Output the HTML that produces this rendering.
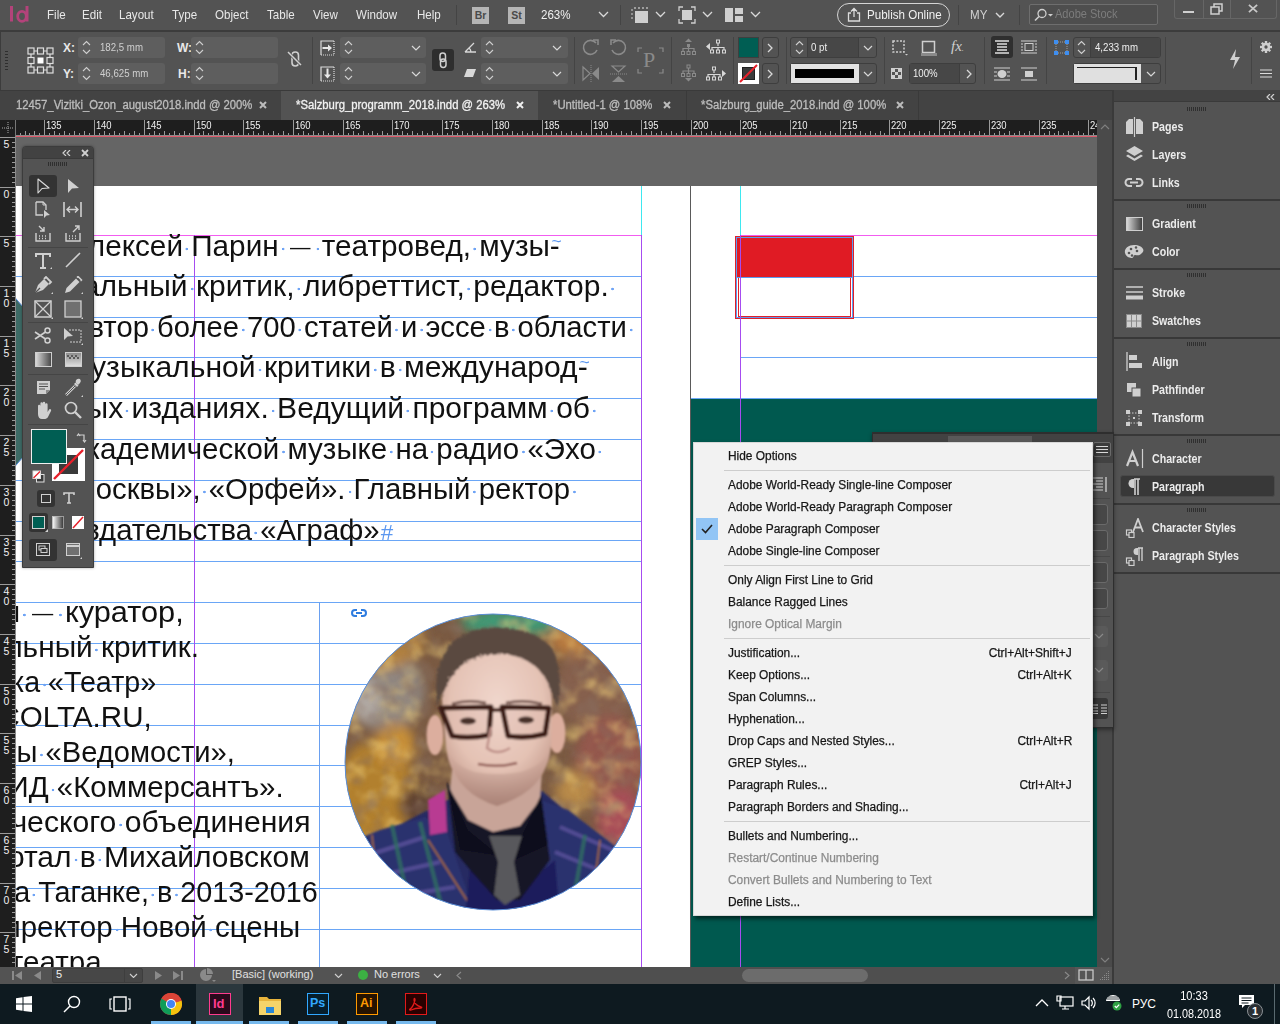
<!DOCTYPE html>
<html><head><meta charset="utf-8">
<style>
*{box-sizing:border-box;margin:0;padding:0}
html,body{width:1280px;height:1024px;overflow:hidden;background:#535353;font-family:"Liberation Sans",sans-serif;color:#e6e6e6;font-size:12px}
.a{position:absolute}
#doc{left:0;top:0;width:1097px;height:967px;clip-path:inset(136px 0 0 16px);overflow:hidden}
.gl{height:1px;background:#6aa6f6}
.tx{font-size:29px;line-height:0;height:0;white-space:pre;color:#111;transform-origin:0 0}
.tx b{font-weight:normal;background:radial-gradient(circle,#6ea3f5 0,#6ea3f5 1px,transparent 1.6px) no-repeat;background-size:4px 4px;background-position:center 17px}
.tx .em{font-style:normal;font-size:20px;position:relative;top:-2px;margin:0 3px}
.tx u{text-decoration:none;color:#5b97f0;font-size:17px;position:relative;top:-9px;margin-left:-8px}
.tx s{text-decoration:none;color:#5b97f0;font-size:22px;font-style:italic;margin-left:1px}
.mb{top:7px;font-size:13px;color:#e8e8e8;transform:scaleX(.89);transform-origin:0 0;white-space:pre}
.vs{width:1px;background:#444}
.lb{font-weight:bold;font-size:12px;color:#e8e8e8}
.fld{height:21px;background:#5e5e5e;border-radius:3px}
.btn{width:17px;height:21px;border:1px solid #3e3e3e;border-radius:3px}
.tb{top:98px;font-size:12px;color:#bdbdbd;-webkit-text-stroke:0.3px currentColor;transform:scaleX(.94);transform-origin:0 0;white-space:pre}
.tx2{top:96px;font-size:14px;font-weight:bold;color:#c8c8c8}
.mi{font-size:12px;line-height:15px;white-space:pre;-webkit-text-stroke:0.25px currentColor}
.rl{font-size:10.5px;line-height:14px;color:#f0f0f0;letter-spacing:-0.2px;transform:scaleX(.9);transform-origin:0 0}
.rlv{font-size:10.5px;line-height:10px;color:#f0f0f0;width:9px;text-align:center}
.dsep{left:1114px;width:166px;height:1.5px;background:#383838}
.grip{left:1187px;width:19px;height:4px;background:repeating-linear-gradient(90deg,#2f2f2f 0 1px,transparent 1px 2px)}
.di{left:1152px;font-size:12.5px;font-weight:bold;color:#ececec;line-height:15px;transform:scaleX(.85);transform-origin:0 0;white-space:pre}
.tsep{left:28px;width:60px;height:1px;background:#454545}
.pbox{left:1040px;width:68px;height:21px;border:1px solid #6a6a6a;border-radius:3px;background:#474747}
.val{font-size:11.5px;color:#d0d0d0;transform:scaleX(.84);transform-origin:0 0;white-space:pre}
.spn{width:9px;height:15px}
</style></head><body>
<div id="doc" class="a">
<div class="a" style="left:0;top:0;width:1097px;height:967px;background:#656565"></div>
<div class="a" style="left:-100px;top:186px;width:790px;height:900px;background:#fff"></div>
<div class="a" style="left:691px;top:186px;width:500px;height:900px;background:#fff"></div>
<div class="a" style="left:690px;top:186px;width:1px;height:900px;background:#5a5a5a"></div>
<div class="a" style="left:691px;top:398px;width:420px;height:600px;background:#00594f"></div>
<div class="a gl" style="left:0;top:276px;width:641px"></div>
<div class="a gl" style="left:854px;top:276px;width:243px"></div>
<div class="a gl" style="left:0;top:317px;width:641px"></div>
<div class="a gl" style="left:854px;top:317px;width:243px"></div>
<div class="a gl" style="left:0;top:357px;width:641px"></div>
<div class="a gl" style="left:740px;top:357px;width:357px"></div>
<div class="a gl" style="left:0;top:398px;width:641px"></div>
<div class="a gl" style="left:0;top:439px;width:641px"></div>
<div class="a gl" style="left:0;top:480px;width:641px"></div>
<div class="a gl" style="left:0;top:521px;width:641px"></div>
<div class="a gl" style="left:0;top:561px;width:641px"></div>
<div class="a gl" style="left:0;top:602px;width:641px"></div>
<div class="a gl" style="left:0;top:643px;width:641px"></div>
<div class="a gl" style="left:0;top:684px;width:641px"></div>
<div class="a gl" style="left:0;top:725px;width:641px"></div>
<div class="a gl" style="left:0;top:765px;width:641px"></div>
<div class="a gl" style="left:0;top:806px;width:641px"></div>
<div class="a gl" style="left:0;top:847px;width:641px"></div>
<div class="a gl" style="left:0;top:888px;width:641px"></div>
<div class="a gl" style="left:0;top:929px;width:641px"></div>
<div class="a gl" style="left:0;top:969px;width:641px"></div>
<div class="a gl" style="left:0;top:540px;width:641px"></div>
<div class="a gl" style="left:691px;top:398px;width:410px"></div>
<svg class="a" style="left:0;top:290px" width="24" height="190" viewBox="0 290 24 190"><path d="M0 280 L23 307 L23 457 L0 484 Z" fill="#3d6b66" stroke="#5a8fe0" stroke-width="1"/></svg>
<div class="a" style="left:735px;top:236px;width:119px;height:83px;border:1px solid #e0202a;background:#fff"></div>
<div class="a" style="left:736px;top:237px;width:117px;height:81px;border:1px solid #5b9bf0"></div>
<div class="a" style="left:737px;top:238px;width:115px;height:39px;background:#e01b24"></div>
<div class="a" style="left:737px;top:277px;width:115px;height:1px;background:#5b9bf0"></div>
<div class="a" style="left:738px;top:278px;width:113px;height:39px;border:1px solid #e0202a;border-top:none"></div>
<div class="a" style="left:0;top:235px;width:642px;height:1px;background:#f25cf0"></div>
<div class="a" style="left:740px;top:235px;width:360px;height:1px;background:#f25cf0"></div>
<div class="a" style="left:641px;top:186px;width:1px;height:49px;background:#3ee8f0"></div>
<div class="a" style="left:641px;top:235px;width:1px;height:740px;background:#a64cf0"></div>
<div class="a" style="left:740px;top:186px;width:1px;height:49px;background:#3ee8f0"></div>
<div class="a" style="left:740px;top:235px;width:1px;height:740px;background:#a64cf0"></div>
<div class="a" style="left:194px;top:235px;width:1px;height:740px;background:#a64cf0"></div>
<div class="a" style="left:319px;top:602px;width:1px;height:370px;background:#6aa0f0"></div>
<div class="a tx" style="left:67.79px;top:246px;transform:scaleX(1.0244)">Алексей<b> </b>Парин<b> </b><i class="em">—</i><b> </b>театровед,<b> </b>музы-<u>~</u></div>
<div class="a tx" style="left:68.58px;top:286px;transform:scaleX(1.0353)">кальный<b> </b>критик,<b> </b>либреттист,<b> </b>редактор.<b> </b></div>
<div class="a tx" style="left:69.46px;top:326.5px;transform:scaleX(1.0076)">Автор<b> </b>более<b> </b>700<b> </b>статей<b> </b>и<b> </b>эссе<b> </b>в<b> </b>области<b> </b></div>
<div class="a tx" style="left:69.5px;top:367px;transform:scaleX(1.0383)">музыкальной<b> </b>критики<b> </b>в<b> </b>международ-<u>~</u></div>
<div class="a tx" style="left:69.5px;top:408px;transform:scaleX(1.0361)">ных<b> </b>изданиях.<b> </b>Ведущий<b> </b>программ<b> </b>об<b> </b></div>
<div class="a tx" style="left:69.5px;top:449px;transform:scaleX(1.0168)">академической<b> </b>музыке<b> </b>на<b> </b>радио<b> </b>«Эхо<b> </b></div>
<div class="a tx" style="left:71.16px;top:489px;transform:scaleX(1.011)">Москвы»,<b> </b>«Орфей».<b> </b>Главный<b> </b>ректор<b> </b></div>
<div class="a tx" style="left:69.5px;top:530px;transform:scaleX(1.0089)">издательства<b> </b>«Аграф»<s>#</s></div>
<div class="a tx" style="left:-229.74px;top:612px;transform:scaleX(1.0601)">Александр<b> </b>Рябин<b> </b><i class="em">—</i><b> </b>куратор,</div>
<div class="a tx" style="left:-96.03px;top:647px;transform:scaleX(1.0289)">музыкальный<b> </b>критик.</div>
<div class="a tx" style="left:-377.58px;top:682px;transform:scaleX(0.9873)">обозреватель<b> </b>журнала-сайтика<b> </b>«Театр»</div>
<div class="a tx" style="left:-112.2px;top:717px;transform:scaleX(1.0197)">и<b> </b>сайта<b> </b>COLTA.RU,</div>
<div class="a tx" style="left:-50.57px;top:752px;transform:scaleX(1.0053)">газеты<b> </b>«Ведомости»,</div>
<div class="a tx" style="left:-16.6px;top:787px;transform:scaleX(1.0144)">и<b> </b>ИД<b> </b>«Коммерсантъ».</div>
<div class="a tx" style="left:-51.27px;top:822px;transform:scaleX(1.0402)">творческого<b> </b>объединения</div>
<div class="a tx" style="left:-44.58px;top:857px;transform:scaleX(1.0344)">Работал<b> </b>в<b> </b>Михайловском</div>
<div class="a tx" style="left:-99.11px;top:892px;transform:scaleX(0.991)">театре<b> </b>на<b> </b>Таганке,<b> </b>в<b> </b>2013-2016</div>
<div class="a tx" style="left:-12.84px;top:927px;transform:scaleX(1.0166)">директор<b> </b>Новой<b> </b>сцены</div>
<div class="a tx" style="left:-133.23px;top:962px;transform:scaleX(1.0197)">Большого<b> </b>театра</div>
<svg class="a" style="left:351px;top:608px" width="16" height="10" viewBox="0 0 16 10"><path d="M6 2H4a3 3 0 0 0 0 6h2M10 2h2a3 3 0 0 1 0 6h-2M5 5h6" stroke="#2f7de0" stroke-width="2" fill="none"/></svg>
</div>
<svg class="a" style="left:343px;top:612px" width="300" height="300" viewBox="343 612 300 300">
<defs>
<clipPath id="pc"><circle cx="493" cy="762" r="148"/></clipPath>
<filter id="bl" x="-30%" y="-30%" width="160%" height="160%"><feGaussianBlur stdDeviation="6"/></filter>
<filter id="bl2" x="-10%" y="-10%" width="120%" height="120%"><feGaussianBlur stdDeviation="0.8"/></filter>
<filter id="leaf" x="0" y="0" width="100%" height="100%"><feTurbulence type="fractalNoise" baseFrequency="0.05" numOctaves="3" seed="11"/><feColorMatrix values="0 0 0 0 0.86  0 0 0 0 0.62  0 0 0 0 0.20  2.2 0 0 0 -1.0"/><feGaussianBlur stdDeviation="1.4"/></filter>
<filter id="dark" x="0" y="0" width="100%" height="100%"><feTurbulence type="fractalNoise" baseFrequency="0.06" numOctaves="3" seed="4"/><feColorMatrix values="0 0 0 0 0.25  0 0 0 0 0.16  0 0 0 0 0.12  0 2.4 0 0 -1.1"/><feGaussianBlur stdDeviation="1.4"/></filter>
<filter id="curl" x="-10%" y="-10%" width="120%" height="120%"><feTurbulence type="turbulence" baseFrequency="0.3" numOctaves="2" seed="3" result="t"/><feDisplacementMap in="SourceGraphic" in2="t" scale="4"/></filter>
<filter id="plaid" x="0" y="0" width="100%" height="100%"><feTurbulence type="fractalNoise" baseFrequency="0.2" numOctaves="1" seed="9"/><feColorMatrix values="0 0 0 0 0.35  0 0 0 0 0.3  0 0 0 0 0.65  0 0 2.5 0 -1.3"/></filter>
<radialGradient id="skin" cx="0.5" cy="0.35" r="0.65"><stop offset="0" stop-color="#f0d6cc"/><stop offset="0.65" stop-color="#e4c2b4"/><stop offset="1" stop-color="#c49a8c"/></radialGradient>
<linearGradient id="stub" x1="0" y1="0" x2="0" y2="1"><stop offset="0" stop-color="#b89488" stop-opacity="0"/><stop offset="1" stop-color="#a07a70" stop-opacity=".75"/></linearGradient>
</defs>
<g clip-path="url(#pc)">
<rect x="340" y="610" width="310" height="310" fill="#7a5a42"/>
<g filter="url(#bl)">
<ellipse cx="385" cy="690" rx="40" ry="40" fill="#8f8680"/>
<ellipse cx="375" cy="640" rx="50" ry="30" fill="#b08040"/>
<ellipse cx="375" cy="795" rx="40" ry="55" fill="#b2802e"/>
<ellipse cx="395" cy="745" rx="20" ry="22" fill="#c89038"/>
<ellipse cx="365" cy="700" rx="16" ry="22" fill="#b0a8a2"/>
<ellipse cx="420" cy="805" rx="20" ry="20" fill="#5e4230"/>
<ellipse cx="510" cy="622" rx="50" ry="14" fill="#3f9a76"/>
<ellipse cx="585" cy="640" rx="35" ry="20" fill="#b87a40"/>
<ellipse cx="595" cy="690" rx="40" ry="40" fill="#86604e"/>
<ellipse cx="610" cy="760" rx="35" ry="45" fill="#94584e"/>
<ellipse cx="575" cy="790" rx="20" ry="20" fill="#b88a48"/>
<ellipse cx="622" cy="820" rx="25" ry="30" fill="#a84e58"/>
</g>
<rect x="340" y="610" width="310" height="310" filter="url(#leaf)" opacity=".7"/>
<rect x="340" y="610" width="310" height="310" filter="url(#dark)" opacity=".6"/>
<g filter="url(#bl2)">
<path d="M380 835 L447 800 L541 790 L600 840 L650 870 L650 920 L340 920 L340 860 Z" fill="#262a62"/>
<path d="M330 850 L380 830 L425 817 L447 832 L470 900 L475 920 L330 920 Z" fill="#2c336e"/>
<path d="M540 800 L568 810 L620 850 L650 870 L650 920 L530 920 L548 860 Z" fill="#2c336e"/>
<path d="M347 862 L425 837 M352 882 L440 862 M360 902 L455 887 M560 827 L640 862 M555 852 L640 887" stroke="#5e54a0" stroke-width="4" opacity=".75"/>
<path d="M392 825 L412 920 M420 822 L445 920 M585 835 L570 920" stroke="#2f6e62" stroke-width="4" opacity=".8"/>
<path d="M428 840 L470 905 M600 840 L590 920 M372 835 L380 920" stroke="#a0683a" stroke-width="1.6"/>
<path d="M470 865 L510 900 L555 860 L560 920 L465 920 Z" fill="#1c1a5c"/>
<path d="M447 782 L470 815 L493 828 L520 815 L541 795 L550 860 L520 900 L497 900 L470 870 L455 852 Z" fill="#181628"/>
<path d="M428 800 L445 790 L447 832 L430 835 Z" fill="#b83a92"/>
<path d="M452 770 L542 770 L540 800 L520 826 L493 832 L468 820 L450 790 Z" fill="#c8a498"/>
<path d="M447 782 L468 830 L500 856 L460 850 Z" fill="#10101c"/>
<path d="M541 795 L522 835 L515 860 L548 845 Z" fill="#10101c"/>
<path d="M489 836 L522 836 L514 862 L520 895 L505 905 L494 895 L498 862 Z" fill="#58585c"/>
<ellipse cx="435" cy="735" rx="8.5" ry="20" fill="#dcae9e"/>
<ellipse cx="557" cy="733" rx="8.5" ry="20" fill="#dcae9e"/>
<path d="M442 700 Q444 650 497 648 Q550 650 552 700 L551 745 Q548 790 497 806 Q452 792 446 748 Z" fill="url(#skin)"/>
<path d="M448 748 Q452 792 497 806 Q548 790 550 748 Q545 765 520 772 Q497 776 475 772 Q452 765 448 748Z" fill="url(#stub)"/>
<path d="M436 706 Q430 664 452 640 Q475 624 500 627 Q532 628 550 646 Q564 670 556 706 Q552 694 546 680 Q532 654 497 653 Q460 655 448 680 Q442 692 436 706 Z" fill="#5a4840" filter="url(#curl)"/>
<path d="M452 704 Q468 699 486 703 M506 703 Q524 699 542 704" stroke="#6e5048" stroke-width="2.5" fill="none"/>
<path d="M441 708 L491 707 L489 735 Q470 739 452 736 Z" fill="#d8b0a4" fill-opacity=".2" stroke="#3a1a12" stroke-width="5" stroke-linejoin="round"/>
<path d="M502 707 L549 708 L545 734 Q526 739 508 736 Z" fill="#d8b0a4" fill-opacity=".2" stroke="#3a1a12" stroke-width="5" stroke-linejoin="round"/>
<path d="M491 710 L502 710" stroke="#3e1e14" stroke-width="3.5"/>
<ellipse cx="468" cy="721" rx="8" ry="3.5" fill="#4a302a"/>
<ellipse cx="526" cy="720" rx="8" ry="3.5" fill="#4a302a"/>
<path d="M491 727 L487 748 Q497 756 510 748" stroke="#c0928a" stroke-width="2.5" fill="none"/>
<path d="M478 764 Q497 768 517 763" stroke="#94605a" stroke-width="2.5" fill="none"/>
</g>
</g>
<circle cx="493" cy="762" r="148" fill="none" stroke="#5b8fd8" stroke-width="1"/>
</svg>

<div class="a" style="left:22px;top:146px;width:72px;height:422px;background:#535353;border:1px solid #3c3c3c;border-radius:4px 4px 0 0;box-shadow:0 0 3px rgba(0,0,0,.35)"></div>
<div class="a" style="left:23px;top:147px;width:70px;height:12px;background:#424242;border-bottom:1px solid #3a3a3a;border-radius:3px 3px 0 0"></div>
<svg class="a" style="left:62px;top:150px" width="9" height="6"><path d="M4 0L1 3l3 3M8 0L5 3l3 3" stroke="#d0d0d0" stroke-width="1.2" fill="none"/></svg>
<svg class="a" style="left:81px;top:149px" width="8" height="8"><path d="M1 1l6 6M7 1L1 7" stroke="#d0d0d0" stroke-width="1.8"/></svg>
<div class="a" style="left:48px;top:162px;width:19px;height:4px;background:repeating-linear-gradient(90deg,#2f2f2f 0 1px,transparent 1px 2px)"></div>
<div class="a" style="left:29px;top:175px;width:28px;height:22px;background:#333;border-radius:3px"></div>
<svg class="a" style="left:37px;top:178px" width="13" height="16" viewBox="0 0 13 16"><path d="M1 1v14l4-4.5L12 10z" stroke="#dcdcdc" stroke-width="1.1" fill="none" stroke-linejoin="round"/></svg>
<svg class="a" style="left:67px;top:178px" width="13" height="16" viewBox="0 0 13 16"><path d="M1 1v14l4-4.5L12 10z" fill="#d0d0d0"/></svg>
<svg class="a" style="left:35px;top:201px" width="16" height="17" viewBox="0 0 16 17"><path d="M1 1h7l3 3v5M1 1v13h7" stroke="#d0d0d0" stroke-width="1.3" fill="none"/><path d="M8 1v3h3" stroke="#d0d0d0" fill="none"/><path d="M9 9v8l2.5-2.5L15 14z" fill="#d0d0d0"/></svg>
<svg class="a" style="left:63px;top:202px" width="19" height="15" viewBox="0 0 19 15"><path d="M1 0v15M18 0v15" stroke="#d0d0d0" stroke-width="1.6"/><path d="M4 7.5h11M7 4.5L4 7.5l3 3M12 4.5l3 3-3 3" stroke="#d0d0d0" stroke-width="1.4" fill="none"/></svg>
<svg class="a" style="left:35px;top:225px" width="16" height="17" viewBox="0 0 16 17"><path d="M1 8v8h14V8" stroke="#d0d0d0" stroke-width="1.4" fill="none"/><path d="M4 11h1M7 11h1M10 11h1M4 13.5h1M7 13.5h1M10 13.5h1" stroke="#d0d0d0" stroke-width="1.6"/><path d="M4 1l5 5M9 2v4H5" stroke="#d0d0d0" stroke-width="1.4" fill="none"/></svg>
<svg class="a" style="left:65px;top:225px" width="16" height="17" viewBox="0 0 16 17"><path d="M1 8v8h14V8" stroke="#d0d0d0" stroke-width="1.4" fill="none"/><path d="M4 11h1M7 11h1M10 11h1M4 13.5h1M7 13.5h1M10 13.5h1" stroke="#d0d0d0" stroke-width="1.6"/><path d="M8 7l6-6M10 1h4v4" stroke="#d0d0d0" stroke-width="1.4" fill="none"/></svg>
<div class="a tsep" style="top:247px"></div>
<svg class="a" style="left:35px;top:253px" width="18" height="17" viewBox="0 0 18 17"><path d="M1 4V1h14v3M8 1v14M5 15h6" stroke="#d0d0d0" stroke-width="2" fill="none"/><path d="M15 16l2-2v2z" fill="#d0d0d0"/></svg>
<svg class="a" style="left:65px;top:252px" width="16" height="16" viewBox="0 0 16 16"><path d="M1 15L15 1" stroke="#d0d0d0" stroke-width="1.6"/></svg>
<svg class="a" style="left:34px;top:276px" width="19" height="19" viewBox="0 0 19 19"><path d="M1 17l3-8 6-6 5 5-6 6z" fill="#d0d0d0"/><path d="M10 3l2-2 5 5-2 2" stroke="#d0d0d0" stroke-width="1.8" fill="none"/><path d="M1 17l5-5" stroke="#535353" stroke-width="1.2"/><path d="M17 18l2-2v2z" fill="#d0d0d0"/></svg>
<svg class="a" style="left:64px;top:276px" width="19" height="19" viewBox="0 0 19 19"><path d="M1 17l1.5-5L12 2.5l3.5 3.5L6 15.5z" fill="#d0d0d0"/><path d="M13 1.5l1-1 3.5 3.5-1 1" stroke="#d0d0d0" stroke-width="1.5" fill="none"/><path d="M17 18l2-2v2z" fill="#d0d0d0"/></svg>
<svg class="a" style="left:34px;top:300px" width="19" height="19" viewBox="0 0 19 19"><rect x="1" y="1" width="16" height="16" stroke="#d0d0d0" stroke-width="1.5" fill="none"/><path d="M1 1l16 16M17 1L1 17" stroke="#d0d0d0" stroke-width="1.2"/><path d="M17 19l2-2v2z" fill="#d0d0d0"/></svg>
<svg class="a" style="left:64px;top:300px" width="19" height="19" viewBox="0 0 19 19"><rect x="1" y="1" width="16" height="16" stroke="#d0d0d0" stroke-width="1.3" fill="#707070"/><path d="M17 19l2-2v2z" fill="#d0d0d0"/></svg>
<div class="a tsep" style="top:322px"></div>
<svg class="a" style="left:34px;top:327px" width="18" height="17" viewBox="0 0 18 17"><circle cx="13.5" cy="3.5" r="2.5" stroke="#d0d0d0" stroke-width="1.5" fill="none"/><circle cx="13.5" cy="13.5" r="2.5" stroke="#d0d0d0" stroke-width="1.5" fill="none"/><path d="M11.5 5L1 12M11.5 12L1 5" stroke="#d0d0d0" stroke-width="1.6"/></svg>
<svg class="a" style="left:63px;top:327px" width="20" height="18" viewBox="0 0 20 18"><path d="M1 1v12l3.5-3.5L10 9z" fill="#d0d0d0"/><path d="M6 3h12v12H6" stroke="#d0d0d0" stroke-dasharray="2 1" fill="none"/><path d="M18 18l2-2v2z" fill="#d0d0d0"/></svg>
<svg class="a" style="left:35px;top:352px" width="17" height="15" viewBox="0 0 17 15"><defs><linearGradient id="tg1"><stop offset="0" stop-color="#dcdcdc"/><stop offset="1" stop-color="#454545"/></linearGradient></defs><rect x=".5" y=".5" width="16" height="14" fill="url(#tg1)" stroke="#cfcfcf"/></svg>
<svg class="a" style="left:65px;top:352px" width="17" height="15" viewBox="0 0 17 15"><defs><linearGradient id="tg2" x2="0" y2="1"><stop offset="0" stop-color="#8a8a8a"/><stop offset="1" stop-color="#e0e0e0"/></linearGradient></defs><rect x=".5" y=".5" width="16" height="14" fill="url(#tg2)" stroke="#cfcfcf"/><path d="M2 3h2v2H2zM6 3h2v2H6zM10 3h2v2h-2zM4 5h2v2H4zM8 5h2v2H8zM12 5h2v2h-2z" fill="#5a5a5a"/></svg>
<div class="a tsep" style="top:374px"></div>
<svg class="a" style="left:36px;top:380px" width="15" height="15" viewBox="0 0 15 15"><path d="M1 1h13v9l-4 4H1z" fill="#d0d0d0"/><path d="M3 4h9M3 6.5h9M3 9h6" stroke="#535353" stroke-width="1.2"/><path d="M10 14v-4h4z" fill="#8a8a8a"/></svg>
<svg class="a" style="left:64px;top:378px" width="19" height="19" viewBox="0 0 19 19"><path d="M2 17l9-9" stroke="#d0d0d0" stroke-width="2.5"/><path d="M2 17l9-9" stroke="#535353" stroke-width="1"/><path d="M10 6l3 3 1.5-1.5-3-3z" fill="#d0d0d0"/><path d="M12 5a3 3 0 0 1 4-4 3 3 0 0 1 0 4l-2 2" fill="#d0d0d0"/><path d="M17 19l2-2v2z" fill="#d0d0d0"/></svg>
<svg class="a" style="left:35px;top:401px" width="17" height="18" viewBox="0 0 17 18"><path d="M3 10V5a1.2 1.2 0 0 1 2.4 0v4V2.5a1.2 1.2 0 0 1 2.4 0V9V2a1.2 1.2 0 0 1 2.4 0v7V3.5a1.2 1.2 0 0 1 2.4 0V11l1.5-2.5a1.2 1.2 0 0 1 2 1.2L13 16c-1 1.5-2 2-4 2H7c-2.5 0-4-2-4-5z" fill="#d0d0d0"/></svg>
<svg class="a" style="left:64px;top:401px" width="18" height="18" viewBox="0 0 18 18"><circle cx="7" cy="7" r="5.5" stroke="#d0d0d0" stroke-width="1.7" fill="none"/><path d="M11 11l6 6" stroke="#d0d0d0" stroke-width="2.4"/></svg>
<div class="a tsep" style="top:424px"></div>
<div class="a" style="left:52px;top:448px;width:33px;height:33px;background:#fff"></div>
<div class="a" style="left:59px;top:455px;width:19px;height:19px;background:#3a3a3a"></div>
<svg class="a" style="left:52px;top:448px" width="33" height="33"><path d="M2 31L31 2" stroke="#e8202a" stroke-width="2.4"/></svg>
<div class="a" style="left:31px;top:429px;width:36px;height:35px;background:#005e53;border:1.5px solid #f0f0f0"></div>
<svg class="a" style="left:76px;top:431px" width="12" height="12" viewBox="0 0 12 12"><path d="M2 4h6v6M1 5l1.5-2L4 5M7 9l1.5 2L10 9" stroke="#d0d0d0" stroke-width="1.2" fill="none"/></svg>
<svg class="a" style="left:32px;top:470px" width="13" height="13" viewBox="0 0 13 13"><rect x="4.5" y="4.5" width="7.5" height="7.5" fill="#3a3a3a" stroke="#e0e0e0"/><rect x="1" y="1" width="7.5" height="7.5" fill="#fff" stroke="#e0e0e0"/><path d="M1.5 8L8 1.5" stroke="#e8202a" stroke-width="1.2"/></svg>
<div class="a" style="left:37px;top:490px;width:18px;height:17px;background:#333;border-radius:3px"></div>
<div class="a" style="left:41px;top:494px;width:10px;height:9px;border:1.2px solid #d0d0d0"></div>
<svg class="a" style="left:63px;top:492px" width="12" height="12" viewBox="0 0 12 12"><path d="M1 3V1h10v2M6 1v10M4 11h4" stroke="#d0d0d0" stroke-width="1.6" fill="none"/></svg>
<div class="a" style="left:29px;top:513px;width:19px;height:19px;background:#333;border-radius:3px"></div>
<div class="a" style="left:32px;top:516px;width:13px;height:13px;background:#005e53;border:1px solid #d0d0d0"></div>
<svg class="a" style="left:45px;top:529px" width="3" height="3"><path d="M3 0v3H0z" fill="#d0d0d0"/></svg>
<svg class="a" style="left:52px;top:516px" width="12" height="13" viewBox="0 0 12 13"><defs><linearGradient id="tg3"><stop offset="0" stop-color="#fff"/><stop offset="1" stop-color="#333"/></linearGradient></defs><rect x=".5" y=".5" width="11" height="12" fill="url(#tg3)" stroke="#d0d0d0" stroke-width=".6"/></svg>
<svg class="a" style="left:72px;top:516px" width="12" height="13" viewBox="0 0 12 13"><rect x="0" y="0" width="12" height="13" fill="#fff"/><path d="M1 12L11 1" stroke="#e8202a" stroke-width="1.5"/></svg>
<div class="a" style="left:29px;top:539px;width:28px;height:22px;background:#333;border-radius:3px"></div>
<svg class="a" style="left:36px;top:543px" width="14" height="13" viewBox="0 0 14 13"><rect x=".5" y=".5" width="13" height="12" stroke="#d0d0d0" fill="none"/><rect x="3" y="3" width="6" height="4" stroke="#d0d0d0" fill="none"/><rect x="5" y="5.5" width="6" height="4" stroke="#d0d0d0" fill="#333"/></svg>
<svg class="a" style="left:66px;top:543px" width="16" height="16" viewBox="0 0 16 16"><rect x=".5" y=".5" width="13" height="12" stroke="#d0d0d0" fill="#707070"/><path d="M1 3h12" stroke="#d0d0d0" stroke-width="2"/><path d="M14 16l2-2v2z" fill="#d0d0d0"/></svg>

<!-- MENU BAR -->
<div class="a" style="left:0;top:0;width:1280px;height:30px;background:#535353"></div>
<svg class="a" style="left:8px;top:5px" width="22" height="18" viewBox="0 0 22 18"><rect x="2" y="1" width="3" height="15.5" fill="#b3437a"/><path d="M17.5 1h3v15.5h-3z" fill="#b3437a"/><ellipse cx="14" cy="11.3" rx="4.3" ry="5" stroke="#b3437a" stroke-width="2.8" fill="none"/></svg>
<div class="a mb" style="left:47px">File</div>
<div class="a mb" style="left:82px">Edit</div>
<div class="a mb" style="left:119px">Layout</div>
<div class="a mb" style="left:172px">Type</div>
<div class="a mb" style="left:215px">Object</div>
<div class="a mb" style="left:267px">Table</div>
<div class="a mb" style="left:313px">View</div>
<div class="a mb" style="left:356px">Window</div>
<div class="a mb" style="left:417px">Help</div>
<div class="a vs" style="left:456px;top:5px;height:20px"></div>
<div class="a" style="left:472px;top:7px;width:17px;height:17px;background:#b5b5b5;color:#4a4a4a;font-weight:bold;font-size:10.5px;line-height:17px;text-align:center">Br</div>
<div class="a" style="left:508px;top:7px;width:17px;height:17px;background:#b5b5b5;color:#4a4a4a;font-weight:bold;font-size:10.5px;line-height:17px;text-align:center">St</div>
<div class="a mb" style="left:541px;color:#f0f0f0">263%</div>
<svg class="a" style="left:598px;top:11px" width="11" height="7"><path d="M1 1l4.5 4.5L10 1" stroke="#d8d8d8" stroke-width="1.3" fill="none"/></svg>
<div class="a vs" style="left:620px;top:5px;height:20px"></div>
<svg class="a" style="left:630px;top:6px" width="20" height="18" viewBox="0 0 20 18"><path d="M1 4h2M1 8h2M1 12h2M5 1v2M9 1v2M13 1v2M17 1v2" stroke="#cfcfcf" stroke-width="1.2"/><rect x="5" y="5" width="13" height="12" fill="#cfcfcf"/></svg>
<svg class="a" style="left:655px;top:11px" width="11" height="7"><path d="M1 1l4.5 4.5L10 1" stroke="#d8d8d8" stroke-width="1.3" fill="none"/></svg>
<svg class="a" style="left:678px;top:6px" width="18" height="18" viewBox="0 0 18 18"><path d="M1 5V1h4M13 1h4v4M17 13v4h-4M5 17H1v-4" stroke="#cfcfcf" stroke-width="1.3" fill="none"/><rect x="4" y="4" width="10" height="10" fill="#cfcfcf"/></svg>
<svg class="a" style="left:702px;top:11px" width="11" height="7"><path d="M1 1l4.5 4.5L10 1" stroke="#d8d8d8" stroke-width="1.3" fill="none"/></svg>
<svg class="a" style="left:725px;top:8px" width="18" height="14" viewBox="0 0 18 14"><rect x="0" y="0" width="8" height="14" fill="#cfcfcf"/><rect x="10" y="0" width="8" height="6" fill="#cfcfcf"/><rect x="10" y="8" width="8" height="6" fill="#cfcfcf"/></svg>
<svg class="a" style="left:750px;top:11px" width="11" height="7"><path d="M1 1l4.5 4.5L10 1" stroke="#d8d8d8" stroke-width="1.3" fill="none"/></svg>
<div class="a" style="left:837px;top:3px;width:113px;height:24px;border:1.3px solid #d5d5d5;border-radius:12px"></div>
<svg class="a" style="left:847px;top:7px" width="14" height="15" viewBox="0 0 14 15"><path d="M4 6H1.5v8h11V6H10M7 10V1.5M4 4.5l3-3 3 3" stroke="#dcdcdc" stroke-width="1.3" fill="none"/></svg>
<div class="a mb" style="left:867px;color:#f0f0f0">Publish Online</div>
<div class="a vs" style="left:958px;top:5px;height:20px"></div>
<div class="a mb" style="left:970px;color:#d0d0d0">MY</div>
<svg class="a" style="left:995px;top:12px" width="10" height="7"><path d="M1 1l4 4 4-4" stroke="#d8d8d8" stroke-width="1.4" fill="none"/></svg>
<div class="a vs" style="left:1019px;top:5px;height:20px"></div>
<div class="a" style="left:1029px;top:4px;width:129px;height:21px;border:1px solid #6e6e6e;border-radius:2px;background:#4e4e4e"></div>
<svg class="a" style="left:1034px;top:8px" width="20" height="14" viewBox="0 0 20 14"><circle cx="8" cy="5.5" r="4" stroke="#cfcfcf" stroke-width="1.3" fill="none"/><path d="M5 8.5L1 12.5" stroke="#cfcfcf" stroke-width="1.6"/><path d="M14 6l2.5 2.5L19 6z" fill="#cfcfcf"/></svg>
<div class="a" style="left:1055px;top:7px;font-size:12px;color:#7c7c7c;transform:scaleX(.92);transform-origin:0 0;white-space:pre">Adobe Stock</div>
<div class="a" style="left:1174px;top:0;width:103px;height:19px;border:1px solid #666;border-top:none;border-radius:0 0 3px 3px"></div>
<div class="a" style="left:1203px;top:0;width:1px;height:18px;background:#666"></div>
<div class="a" style="left:1230px;top:0;width:1px;height:18px;background:#666"></div>
<div class="a" style="left:1183px;top:11px;width:11px;height:2px;background:#d0d0d0"></div>
<svg class="a" style="left:1210px;top:3px" width="13" height="12" viewBox="0 0 13 12"><rect x="1" y="4" width="8" height="7" stroke="#d0d0d0" stroke-width="1.5" fill="none"/><path d="M4 4V1h8v7H9" stroke="#d0d0d0" stroke-width="1.5" fill="none"/></svg>
<svg class="a" style="left:1248px;top:4px" width="11" height="10" viewBox="0 0 12 11"><path d="M1 1l9 8M10 1L1 9" stroke="#c8c8c8" stroke-width="2"/></svg>

<!-- CONTROL PANEL -->
<div class="a" style="left:0;top:30px;width:1280px;height:2px;background:#3c3c3c"></div>
<div class="a" style="left:0;top:32px;width:1280px;height:58px;background:#535353;border-left:1px solid #3c3c3c"></div>
<div class="a" style="left:5px;top:51px;width:3px;height:19px;background:repeating-linear-gradient(#2e2e2e 0 1px,transparent 1px 3px)"></div>
<svg class="a" style="left:27px;top:47px" width="27" height="27" viewBox="0 0 27 27"><g stroke="#dedede" stroke-width="1.2" fill="none"><rect x="1" y="1" width="6" height="6"/><rect x="10.5" y="1" width="6" height="6"/><rect x="20" y="1" width="6" height="6"/><rect x="1" y="10.5" width="6" height="6"/><rect x="20" y="10.5" width="6" height="6"/><rect x="1" y="20" width="6" height="6"/><rect x="10.5" y="20" width="6" height="6"/><rect x="20" y="20" width="6" height="6"/><path d="M7 4h3.5M16.5 4H20M7 23h3.5M16.5 23H20M4 7v3.5M4 16.5V20M23 7v3.5M23 16.5V20"/></g><rect x="10.5" y="10.5" width="6" height="6" fill="#fff"/></svg>
<div class="a lb" style="left:63px;top:41px">X:</div>
<div class="a lb" style="left:63px;top:67px">Y:</div>
<div class="a fld" style="left:78px;top:37px;width:87px"></div>
<div class="a fld" style="left:78px;top:63px;width:87px"></div>
<div class="a val" style="left:100px;top:41px">182,5 mm</div>
<div class="a val" style="left:100px;top:67px">46,625 mm</div>
<div class="a lb" style="left:177px;top:41px">W:</div>
<div class="a lb" style="left:178px;top:67px">H:</div>
<div class="a fld" style="left:191px;top:37px;width:87px"></div>
<div class="a fld" style="left:191px;top:63px;width:87px"></div>
<svg class="a" style="left:286px;top:50px" width="17" height="18" viewBox="0 0 17 18"><rect x="6" y="2" width="6.5" height="14" rx="3.2" stroke="#d0d0d0" stroke-width="1.6" fill="none"/><path d="M2 2l13 13" stroke="#535353" stroke-width="3"/><path d="M2 2l13 13" stroke="#d0d0d0" stroke-width="1.5"/></svg>
<div class="a vs" style="left:312px;top:37px;height:47px"></div>
<svg class="a" style="left:320px;top:40px" width="15" height="16" viewBox="0 0 15 16"><path d="M1 15V1h13" stroke="#dcdcdc" stroke-width="1.2" fill="none"/><path d="M14 1v14H1" stroke="#dcdcdc" stroke-width="1.2" stroke-dasharray="1 1" fill="none"/><path d="M2.5 8h7" stroke="#e8e8e8" stroke-width="2"/><path d="M8 4.5l4 3.5-4 3.5z" fill="#e8e8e8"/></svg>
<svg class="a" style="left:320px;top:66px" width="15" height="16" viewBox="0 0 15 16"><path d="M1 15V1h13" stroke="#dcdcdc" stroke-width="1.2" fill="none"/><path d="M14 1v14H1" stroke="#dcdcdc" stroke-width="1.2" stroke-dasharray="1 1" fill="none"/><path d="M7.5 2.5v7" stroke="#e8e8e8" stroke-width="2"/><path d="M4 8.5l3.5 4 3.5-4z" fill="#e8e8e8"/></svg>
<div class="a fld" style="left:340px;top:37px;width:86px"></div>
<div class="a fld" style="left:340px;top:63px;width:86px"></div>
<div class="a" style="left:432px;top:49px;width:22px;height:22px;background:#2e2e2e;border-radius:3px"></div>
<svg class="a" style="left:438px;top:52px" width="10" height="17" viewBox="0 0 10 17"><rect x="2" y="1" width="5.5" height="8.5" rx="2.7" stroke="#d0d0d0" stroke-width="1.5" fill="none"/><rect x="2.5" y="7" width="5.5" height="8.5" rx="2.7" stroke="#d0d0d0" stroke-width="1.5" fill="none"/></svg>
<svg class="a" style="left:464px;top:42px" width="13" height="11" viewBox="0 0 13 11"><path d="M1 10h11M1 10L10 1M7 10a6 6 0 0 0-2-4" stroke="#d8d8d8" stroke-width="1.3" fill="none"/></svg>
<svg class="a" style="left:464px;top:69px" width="12" height="8" viewBox="0 0 12 8"><path d="M3 0h9L9 8H0z" fill="#d8d8d8"/></svg>
<div class="a fld" style="left:481px;top:37px;width:87px"></div>
<div class="a fld" style="left:481px;top:63px;width:87px"></div>
<svg class="a spn" style="left:82px;top:40px" viewBox="0 0 9 15"><path d="M1 5l3.5-3.5L8 5M1 10l3.5 3.5L8 10" stroke="#cfcfcf" stroke-width="1.1" fill="none"/></svg>
<svg class="a spn" style="left:82px;top:66px" viewBox="0 0 9 15"><path d="M1 5l3.5-3.5L8 5M1 10l3.5 3.5L8 10" stroke="#cfcfcf" stroke-width="1.1" fill="none"/></svg>
<svg class="a spn" style="left:195px;top:40px" viewBox="0 0 9 15"><path d="M1 5l3.5-3.5L8 5M1 10l3.5 3.5L8 10" stroke="#cfcfcf" stroke-width="1.1" fill="none"/></svg>
<svg class="a spn" style="left:195px;top:66px" viewBox="0 0 9 15"><path d="M1 5l3.5-3.5L8 5M1 10l3.5 3.5L8 10" stroke="#cfcfcf" stroke-width="1.1" fill="none"/></svg>
<svg class="a spn" style="left:344px;top:40px" viewBox="0 0 9 15"><path d="M1 5l3.5-3.5L8 5M1 10l3.5 3.5L8 10" stroke="#cfcfcf" stroke-width="1.1" fill="none"/></svg>
<svg class="a spn" style="left:344px;top:66px" viewBox="0 0 9 15"><path d="M1 5l3.5-3.5L8 5M1 10l3.5 3.5L8 10" stroke="#cfcfcf" stroke-width="1.1" fill="none"/></svg>
<svg class="a spn" style="left:485px;top:40px" viewBox="0 0 9 15"><path d="M1 5l3.5-3.5L8 5M1 10l3.5 3.5L8 10" stroke="#cfcfcf" stroke-width="1.1" fill="none"/></svg>
<svg class="a spn" style="left:485px;top:66px" viewBox="0 0 9 15"><path d="M1 5l3.5-3.5L8 5M1 10l3.5 3.5L8 10" stroke="#cfcfcf" stroke-width="1.1" fill="none"/></svg>
<svg class="a" style="left:411px;top:45px" width="10" height="6"><path d="M1 1l4 4 4-4" stroke="#d8d8d8" stroke-width="1.2" fill="none"/></svg>
<svg class="a" style="left:411px;top:71px" width="10" height="6"><path d="M1 1l4 4 4-4" stroke="#d8d8d8" stroke-width="1.2" fill="none"/></svg>
<svg class="a" style="left:552px;top:45px" width="10" height="6"><path d="M1 1l4 4 4-4" stroke="#d8d8d8" stroke-width="1.2" fill="none"/></svg>
<svg class="a" style="left:552px;top:71px" width="10" height="6"><path d="M1 1l4 4 4-4" stroke="#d8d8d8" stroke-width="1.2" fill="none"/></svg>
<div class="a vs" style="left:574px;top:37px;height:47px"></div>
<svg class="a" style="left:582px;top:39px" width="18" height="17" viewBox="0 0 18 17"><path d="M14 4A7 7 0 1 0 15 11" stroke="#8a8a8a" stroke-width="1.6" fill="none" stroke-dasharray="30 0"/><path d="M11 1h5v5" stroke="#8a8a8a" stroke-width="1.6" fill="none"/></svg>
<svg class="a" style="left:609px;top:39px" width="18" height="17" viewBox="0 0 18 17"><path d="M4 4A7 7 0 1 1 3 11" stroke="#8a8a8a" stroke-width="1.6" fill="none"/><path d="M7 1H2v5" stroke="#8a8a8a" stroke-width="1.6" fill="none"/></svg>
<svg class="a" style="left:582px;top:65px" width="18" height="17" viewBox="0 0 18 17"><path d="M1 2l7 6.5L1 15z" stroke="#8a8a8a" stroke-width="1.2" fill="none"/><path d="M17 2l-7 6.5 7 6.5z" fill="#8a8a8a"/><path d="M9 0v17" stroke="#8a8a8a" stroke-dasharray="1 1"/></svg>
<svg class="a" style="left:610px;top:65px" width="17" height="18" viewBox="0 0 17 18"><path d="M2 1h13L8.5 7z" stroke="#8a8a8a" stroke-width="1.2" fill="none"/><path d="M2 17h13l-6.5-6z" fill="#8a8a8a"/><path d="M0 9h17" stroke="#8a8a8a" stroke-dasharray="1 1"/></svg>
<svg class="a" style="left:637px;top:47px" width="27" height="27" viewBox="0 0 27 27"><path d="M1 5V1h4M22 1h4v4M26 22v4h-4M5 26H1v-4" stroke="#8a8a8a" stroke-width="1.2" fill="none"/></svg>
<div class="a" style="left:643px;top:47px;font-family:'Liberation Serif',serif;font-size:22px;color:#8a8a8a">P</div>
<div class="a vs" style="left:671px;top:37px;height:47px"></div>
<svg class="a" style="left:680px;top:38px" width="17" height="18" viewBox="0 0 17 18"><path d="M5 4l3.5-3.5L12 4z" fill="#8a8a8a"/><path d="M8.5 6v4M3 13v-2.5h11V13M8.5 10.5V13" stroke="#8a8a8a" stroke-width="1.2" fill="none"/><rect x="7" y="6" width="3" height="3" fill="#8a8a8a"/><g stroke="#8a8a8a" fill="none"><rect x="1.5" y="13.5" width="3" height="3"/><rect x="7" y="13.5" width="3" height="3"/><rect x="12.5" y="13.5" width="3" height="3"/></g></svg>
<svg class="a" style="left:706px;top:39px" width="20" height="15" viewBox="0 0 20 15"><path d="M4 4L0 7.5 4 11z" fill="#d8d8d8"/><path d="M12 4v3M6 11V8.5h12V11M12 8.5V11" stroke="#d8d8d8" stroke-width="1.2" fill="none"/><rect x="10.5" y="1" width="3" height="3" stroke="#d8d8d8" fill="none"/><g stroke="#d8d8d8" fill="none"><rect x="4.5" y="11" width="3" height="3"/><rect x="10.5" y="11" width="3" height="3"/><rect x="16.5" y="11" width="3" height="3"/></g></svg>
<svg class="a" style="left:680px;top:64px" width="17" height="18" viewBox="0 0 17 18"><path d="M5 14l3.5 3.5L12 14z" fill="#8a8a8a"/><path d="M8.5 4v3M3 9.5V7h11v2.5M8.5 7v2.5" stroke="#8a8a8a" stroke-width="1.2" fill="none"/><g stroke="#8a8a8a" fill="none"><rect x="7" y="1" width="3" height="3"/><rect x="1.5" y="9.5" width="3" height="3"/><rect x="7" y="9.5" width="3" height="3"/><rect x="12.5" y="9.5" width="3" height="3"/></g></svg>
<svg class="a" style="left:706px;top:66px" width="20" height="15" viewBox="0 0 20 15"><path d="M16 4l4 3.5-4 3.5z" fill="#d8d8d8"/><path d="M8 4v3M2 11V8.5h12V11M8 8.5V11" stroke="#d8d8d8" stroke-width="1.2" fill="none"/><rect x="6.5" y="1" width="3" height="3" stroke="#d8d8d8" fill="none"/><g stroke="#d8d8d8" fill="none"><rect x="0.5" y="11" width="3" height="3"/><rect x="6.5" y="11" width="3" height="3"/><rect x="12.5" y="11" width="3" height="3"/></g></svg>
<div class="a vs" style="left:733px;top:37px;height:47px"></div>
<div class="a" style="left:738px;top:37px;width:21px;height:21px;background:#005e53;border:1px solid #3f3f3f"></div>
<div class="a btn" style="left:762px;top:37px"></div>
<svg class="a" style="left:767px;top:43px" width="6" height="10"><path d="M1 1l4 4-4 4" stroke="#d8d8d8" stroke-width="1.3" fill="none"/></svg>
<div class="a" style="left:738px;top:63px;width:21px;height:21px;background:#fff"></div>
<div class="a" style="left:742px;top:67px;width:13px;height:13px;background:#3a3a3a;border:1px solid #202020"></div>
<svg class="a" style="left:738px;top:63px" width="21" height="21"><path d="M2 19L19 2" stroke="#e8202a" stroke-width="2"/></svg>
<div class="a btn" style="left:762px;top:63px"></div>
<svg class="a" style="left:767px;top:69px" width="6" height="10"><path d="M1 1l4 4-4 4" stroke="#d8d8d8" stroke-width="1.3" fill="none"/></svg>
<div class="a vs" style="left:786px;top:37px;height:47px"></div>
<div class="a" style="left:790px;top:37px;width:87px;height:21px;border:1px solid #3e3e3e;border-radius:3px;background:#535353"></div>
<div class="a" style="left:807px;top:38px;width:52px;height:19px;background:#474747;border-left:1px solid #3e3e3e;border-right:1px solid #3e3e3e"></div>
<svg class="a" style="left:795px;top:40px" width="9" height="15"><path d="M1 5l3.5-3.5L8 5M1 10l3.5 3.5L8 10" stroke="#d0d0d0" stroke-width="1.1" fill="none"/></svg>
<div class="a val" style="left:811px;top:41px;color:#f0f0f0">0 pt</div>
<svg class="a" style="left:863px;top:45px" width="10" height="6"><path d="M1 1l4 4 4-4" stroke="#d8d8d8" stroke-width="1.2" fill="none"/></svg>
<div class="a" style="left:790px;top:63px;width:87px;height:21px;border:1px solid #3e3e3e;border-radius:3px;background:#535353"></div>
<div class="a" style="left:791px;top:64px;width:68px;height:19px;background:#e2e2e2"></div>
<div class="a" style="left:795px;top:69px;width:59px;height:9px;background:#000"></div>
<svg class="a" style="left:863px;top:71px" width="10" height="6"><path d="M1 1l4 4 4-4" stroke="#d8d8d8" stroke-width="1.2" fill="none"/></svg>
<div class="a vs" style="left:884px;top:37px;height:47px"></div>
<svg class="a" style="left:892px;top:40px" width="16" height="16" viewBox="0 0 16 16"><path d="M1 1h11v11H1z" stroke="#cfcfcf" stroke-width="1.5" stroke-dasharray="2 1.5" fill="none"/><path d="M13 14l1.5 1.5L16 14z" fill="#cfcfcf"/></svg>
<svg class="a" style="left:921px;top:40px" width="16" height="16" viewBox="0 0 16 16"><rect x="1.5" y="1.5" width="12" height="11" stroke="#cfcfcf" stroke-width="1.5" fill="none"/><rect x="0" y="13" width="16" height="3" fill="#8a8a8a"/></svg>
<div class="a" style="left:951px;top:38px;font-size:15px;font-style:italic;color:#cfcfcf;font-family:'Liberation Serif',serif">fx<span style="font-size:8px">.</span></div>
<svg class="a" style="left:891px;top:68px" width="11" height="11" viewBox="0 0 11 11"><rect x=".5" y=".5" width="10" height="10" fill="#555" stroke="#cfcfcf"/><path d="M1 1h3v3H1zM7 1h3v3H7zM4 4h3v3H4zM1 7h3v3H1zM7 7h3v3H7z" fill="#cfcfcf"/></svg>
<div class="a" style="left:909px;top:63px;width:67px;height:21px;border:1px solid #3e3e3e;border-radius:3px"></div>
<div class="a" style="left:910px;top:64px;width:50px;height:19px;background:#474747;border-right:1px solid #3e3e3e"></div>
<div class="a val" style="left:913px;top:67px;color:#f0f0f0">100%</div>
<svg class="a" style="left:966px;top:69px" width="6" height="10"><path d="M1 1l4 4-4 4" stroke="#d8d8d8" stroke-width="1.3" fill="none"/></svg>
<div class="a vs" style="left:984px;top:37px;height:47px"></div>
<div class="a" style="left:991px;top:36px;width:22px;height:22px;background:#2f2f2f;border-radius:3px"></div>
<svg class="a" style="left:995px;top:40px" width="14" height="14" viewBox="0 0 14 14"><path d="M0 1h14M0 13h14M2 4h10M2 7h10M2 10h10" stroke="#e0e0e0" stroke-width="1.3"/></svg>
<svg class="a" style="left:1021px;top:40px" width="16" height="14" viewBox="0 0 16 14"><path d="M0 1h16M0 13h16M0 4h2M0 7h2M0 10h2M14 4h2M14 7h2M14 10h2" stroke="#cfcfcf" stroke-width="1.2"/><rect x="4" y="3.5" width="8" height="7" stroke="#cfcfcf" fill="none"/></svg>
<svg class="a" style="left:994px;top:67px" width="16" height="14" viewBox="0 0 16 14"><path d="M0 1h16M0 13h16M0 5h3M0 9h3M13 5h3M13 9h3" stroke="#cfcfcf" stroke-width="1.2"/><ellipse cx="8" cy="7" rx="4.5" ry="4" fill="#cfcfcf"/></svg>
<svg class="a" style="left:1021px;top:67px" width="16" height="14" viewBox="0 0 16 14"><path d="M0 1h16M0 13h16" stroke="#cfcfcf" stroke-width="1.2"/><rect x="4" y="4" width="8" height="6" fill="#cfcfcf"/></svg>
<div class="a vs" style="left:1046px;top:37px;height:47px"></div>
<svg class="a" style="left:1054px;top:40px" width="15" height="15" viewBox="0 0 15 15"><path d="M0 0h4v4H0zM11 0h4v4h-4zM0 11h4v4H0zM11 11h4v4h-4z" fill="#3e8ef0"/><path d="M4 2h7M4 13h7M2 4v7M13 4v7" stroke="#a0a0a0" stroke-dasharray="1 1"/></svg>
<div class="a" style="left:1073px;top:37px;width:88px;height:21px;border:1px solid #3e3e3e;border-radius:3px"></div>
<div class="a" style="left:1090px;top:38px;width:70px;height:19px;background:#474747;border-left:1px solid #3e3e3e;border-radius:0 2px 2px 0"></div>
<svg class="a" style="left:1077px;top:40px" width="9" height="15"><path d="M1 5l3.5-3.5L8 5M1 10l3.5 3.5L8 10" stroke="#d0d0d0" stroke-width="1.1" fill="none"/></svg>
<div class="a val" style="left:1095px;top:41px;color:#f0f0f0">4,233 mm</div>
<div class="a" style="left:1073px;top:63px;width:88px;height:21px;border:1px solid #3e3e3e;border-radius:3px"></div>
<div class="a" style="left:1074px;top:64px;width:67px;height:19px;background:#e0e0e0"></div>
<div class="a" style="left:1077px;top:67px;width:60px;height:13px;border-top:1px solid #222;border-right:2px solid #222"></div>
<svg class="a" style="left:1146px;top:71px" width="10" height="6"><path d="M1 1l4 4 4-4" stroke="#d8d8d8" stroke-width="1.2" fill="none"/></svg>
<div class="a vs" style="left:1165px;top:37px;height:47px"></div>
<svg class="a" style="left:1229px;top:49px" width="12" height="20" viewBox="0 0 12 20"><path d="M7 0L1 11h5l-2 9 7-12H6z" fill="#cfcfcf"/></svg>
<div class="a vs" style="left:1251px;top:37px;height:47px"></div>
<svg class="a" style="left:1260px;top:41px" width="12" height="12" viewBox="0 0 13 13"><g fill="#cfcfcf"><rect x="5.2" y="0" width="2.6" height="13"/><rect x="0" y="5.2" width="13" height="2.6"/><rect x="5.2" y="0" width="2.6" height="13" transform="rotate(45 6.5 6.5)"/><rect x="5.2" y="0" width="2.6" height="13" transform="rotate(-45 6.5 6.5)"/><circle cx="6.5" cy="6.5" r="4.6"/></g><circle cx="6.5" cy="6.5" r="1.8" fill="#535353"/></svg>
<svg class="a" style="left:1260px;top:69px" width="12" height="9" viewBox="0 0 12 9"><path d="M0 1h12M0 4.5h12M0 8h12" stroke="#dcdcdc" stroke-width="1"/></svg>

<!-- TABS -->
<div class="a" style="left:0;top:90px;width:1114px;height:30px;background:#434343;border-top:1px solid #3a3a3a"></div>
<div class="a tb" style="left:16px">12457_Vizitki_Ozon_august2018.indd @ 200%</div>
<svg class="a" style="left:259px;top:101px" width="8" height="8"><path d="M1 1l6 6M7 1L1 7" stroke="#bcbcbc" stroke-width="2"/></svg>
<div class="a" style="left:281px;top:91px;width:257px;height:29px;background:#535353"></div>
<div class="a tb" style="left:296px;color:#f2f2f2">*Salzburg_programm_2018.indd @ 263%</div>
<svg class="a" style="left:516px;top:101px" width="8" height="8"><path d="M1 1l6 6M7 1L1 7" stroke="#f0f0f0" stroke-width="2"/></svg>
<div class="a tb" style="left:553px">*Untitled-1 @ 108%</div>
<svg class="a" style="left:663px;top:101px" width="8" height="8"><path d="M1 1l6 6M7 1L1 7" stroke="#bcbcbc" stroke-width="2"/></svg>
<div class="a" style="left:686px;top:91px;width:1px;height:29px;background:#3a3a3a"></div>
<div class="a tb" style="left:701px">*Salzburg_guide_2018.indd @ 100%</div>
<svg class="a" style="left:896px;top:101px" width="8" height="8"><path d="M1 1l6 6M7 1L1 7" stroke="#bcbcbc" stroke-width="2"/></svg>
<div class="a" style="left:918px;top:91px;width:1px;height:29px;background:#3a3a3a"></div>

<!-- RULERS -->
<div class="a" style="left:0;top:120px;width:1097px;height:16px;background:#1e1e1e"></div>
<svg class="a" style="left:16px;top:120px" width="1081" height="16"><path d="M4.5 13V15 M9.5 11V15 M13.5 13V15 M18.5 11V15 M23.5 13V15 M28.5 0V16 M33.5 13V15 M38.5 11V15 M43.5 13V15 M48.5 11V15 M53.5 13V15 M58.5 11V15 M63.5 13V15 M68.5 11V15 M73.5 13V15 M78.5 0V16 M83.5 13V15 M88.5 11V15 M93.5 13V15 M98.5 11V15 M103.5 13V15 M108.5 11V15 M113.5 13V15 M118.5 11V15 M123.5 13V15 M128.5 0V16 M133.5 13V15 M138.5 11V15 M143.5 13V15 M148.5 11V15 M153.5 13V15 M158.5 11V15 M163.5 13V15 M168.5 11V15 M173.5 13V15 M178.5 0V16 M183.5 13V15 M187.5 11V15 M192.5 13V15 M197.5 11V15 M202.5 13V15 M207.5 11V15 M212.5 13V15 M217.5 11V15 M222.5 13V15 M227.5 0V16 M232.5 13V15 M237.5 11V15 M242.5 13V15 M247.5 11V15 M252.5 13V15 M257.5 11V15 M262.5 13V15 M267.5 11V15 M272.5 13V15 M277.5 0V16 M282.5 13V15 M287.5 11V15 M292.5 13V15 M297.5 11V15 M302.5 13V15 M307.5 11V15 M312.5 13V15 M317.5 11V15 M322.5 13V15 M327.5 0V16 M332.5 13V15 M337.5 11V15 M342.5 13V15 M347.5 11V15 M352.5 13V15 M356.5 11V15 M361.5 13V15 M366.5 11V15 M371.5 13V15 M376.5 0V16 M381.5 13V15 M386.5 11V15 M391.5 13V15 M396.5 11V15 M401.5 13V15 M406.5 11V15 M411.5 13V15 M416.5 11V15 M421.5 13V15 M426.5 0V16 M431.5 13V15 M436.5 11V15 M441.5 13V15 M446.5 11V15 M451.5 13V15 M456.5 11V15 M461.5 13V15 M466.5 11V15 M471.5 13V15 M476.5 0V16 M481.5 13V15 M486.5 11V15 M491.5 13V15 M496.5 11V15 M501.5 13V15 M506.5 11V15 M511.5 13V15 M516.5 11V15 M521.5 13V15 M526.5 0V16 M530.5 13V15 M535.5 11V15 M540.5 13V15 M545.5 11V15 M550.5 13V15 M555.5 11V15 M560.5 13V15 M565.5 11V15 M570.5 13V15 M575.5 0V16 M580.5 13V15 M585.5 11V15 M590.5 13V15 M595.5 11V15 M600.5 13V15 M605.5 11V15 M610.5 13V15 M615.5 11V15 M620.5 13V15 M625.5 0V16 M630.5 13V15 M635.5 11V15 M640.5 13V15 M645.5 11V15 M650.5 13V15 M655.5 11V15 M660.5 13V15 M665.5 11V15 M670.5 13V15 M675.5 0V16 M680.5 13V15 M685.5 11V15 M690.5 13V15 M695.5 11V15 M699.5 13V15 M704.5 11V15 M709.5 13V15 M714.5 11V15 M719.5 13V15 M724.5 0V16 M729.5 13V15 M734.5 11V15 M739.5 13V15 M744.5 11V15 M749.5 13V15 M754.5 11V15 M759.5 13V15 M764.5 11V15 M769.5 13V15 M774.5 0V16 M779.5 13V15 M784.5 11V15 M789.5 13V15 M794.5 11V15 M799.5 13V15 M804.5 11V15 M809.5 13V15 M814.5 11V15 M819.5 13V15 M824.5 0V16 M829.5 13V15 M834.5 11V15 M839.5 13V15 M844.5 11V15 M849.5 13V15 M854.5 11V15 M859.5 13V15 M864.5 11V15 M868.5 13V15 M873.5 0V16 M878.5 13V15 M883.5 11V15 M888.5 13V15 M893.5 11V15 M898.5 13V15 M903.5 11V15 M908.5 13V15 M913.5 11V15 M918.5 13V15 M923.5 0V16 M928.5 13V15 M933.5 11V15 M938.5 13V15 M943.5 11V15 M948.5 13V15 M953.5 11V15 M958.5 13V15 M963.5 11V15 M968.5 13V15 M973.5 0V16 M978.5 13V15 M983.5 11V15 M988.5 13V15 M993.5 11V15 M998.5 13V15 M1003.5 11V15 M1008.5 13V15 M1013.5 11V15 M1018.5 13V15 M1023.5 0V16 M1028.5 13V15 M1033.5 11V15 M1038.5 13V15 M1042.5 11V15 M1047.5 13V15 M1052.5 11V15 M1057.5 13V15 M1062.5 11V15 M1067.5 13V15 M1072.5 0V16 M1077.5 13V15" stroke="#9a9a9a" stroke-width="1"/><path d="M0 15.5H1081" stroke="#8a8a8a"/></svg>
<div class="a rl" style="left:46px;top:118px">135</div>
<div class="a rl" style="left:96px;top:118px">140</div>
<div class="a rl" style="left:146px;top:118px">145</div>
<div class="a rl" style="left:196px;top:118px">150</div>
<div class="a rl" style="left:245px;top:118px">155</div>
<div class="a rl" style="left:295px;top:118px">160</div>
<div class="a rl" style="left:345px;top:118px">165</div>
<div class="a rl" style="left:394px;top:118px">170</div>
<div class="a rl" style="left:444px;top:118px">175</div>
<div class="a rl" style="left:494px;top:118px">180</div>
<div class="a rl" style="left:544px;top:118px">185</div>
<div class="a rl" style="left:593px;top:118px">190</div>
<div class="a rl" style="left:643px;top:118px">195</div>
<div class="a rl" style="left:693px;top:118px">200</div>
<div class="a rl" style="left:742px;top:118px">205</div>
<div class="a rl" style="left:792px;top:118px">210</div>
<div class="a rl" style="left:842px;top:118px">215</div>
<div class="a rl" style="left:891px;top:118px">220</div>
<div class="a rl" style="left:941px;top:118px">225</div>
<div class="a rl" style="left:991px;top:118px">230</div>
<div class="a rl" style="left:1041px;top:118px">235</div>
<div class="a rl" style="left:1090px;top:118px">240</div>
<div class="a" style="left:16px;top:136px;width:1081px;height:1px;background:#e15a6b"></div>
<div class="a" style="left:0;top:136px;width:16px;height:831px;background:#1e1e1e"></div>
<svg class="a" style="left:0;top:136px" width="16" height="831"><path d="M0 1.5H16 M12 6.5H16 M12 11.5H16 M12 16.5H16 M12 21.5H16 M12 26.5H16 M12 31.5H16 M12 36.5H16 M12 41.5H16 M12 46.5H16 M0 51.5H16 M12 56.5H16 M12 61.5H16 M12 66.5H16 M12 70.5H16 M12 75.5H16 M12 80.5H16 M12 85.5H16 M12 90.5H16 M12 95.5H16 M0 100.5H16 M12 105.5H16 M12 110.5H16 M12 115.5H16 M12 120.5H16 M12 125.5H16 M12 130.5H16 M12 135.5H16 M12 140.5H16 M12 145.5H16 M0 150.5H16 M12 155.5H16 M12 160.5H16 M12 165.5H16 M12 170.5H16 M12 175.5H16 M12 180.5H16 M12 185.5H16 M12 190.5H16 M12 195.5H16 M0 200.5H16 M12 205.5H16 M12 210.5H16 M12 215.5H16 M12 220.5H16 M12 225.5H16 M12 230.5H16 M12 235.5H16 M12 239.5H16 M12 244.5H16 M0 249.5H16 M12 254.5H16 M12 259.5H16 M12 264.5H16 M12 269.5H16 M12 274.5H16 M12 279.5H16 M12 284.5H16 M12 289.5H16 M12 294.5H16 M0 299.5H16 M12 304.5H16 M12 309.5H16 M12 314.5H16 M12 319.5H16 M12 324.5H16 M12 329.5H16 M12 334.5H16 M12 339.5H16 M12 344.5H16 M0 349.5H16 M12 354.5H16 M12 359.5H16 M12 364.5H16 M12 369.5H16 M12 374.5H16 M12 379.5H16 M12 384.5H16 M12 389.5H16 M12 394.5H16 M0 399.5H16 M12 404.5H16 M12 409.5H16 M12 413.5H16 M12 418.5H16 M12 423.5H16 M12 428.5H16 M12 433.5H16 M12 438.5H16 M12 443.5H16 M0 448.5H16 M12 453.5H16 M12 458.5H16 M12 463.5H16 M12 468.5H16 M12 473.5H16 M12 478.5H16 M12 483.5H16 M12 488.5H16 M12 493.5H16 M0 498.5H16 M12 503.5H16 M12 508.5H16 M12 513.5H16 M12 518.5H16 M12 523.5H16 M12 528.5H16 M12 533.5H16 M12 538.5H16 M12 543.5H16 M0 548.5H16 M12 553.5H16 M12 558.5H16 M12 563.5H16 M12 568.5H16 M12 573.5H16 M12 578.5H16 M12 582.5H16 M12 587.5H16 M12 592.5H16 M0 597.5H16 M12 602.5H16 M12 607.5H16 M12 612.5H16 M12 617.5H16 M12 622.5H16 M12 627.5H16 M12 632.5H16 M12 637.5H16 M12 642.5H16 M0 647.5H16 M12 652.5H16 M12 657.5H16 M12 662.5H16 M12 667.5H16 M12 672.5H16 M12 677.5H16 M12 682.5H16 M12 687.5H16 M12 692.5H16 M0 697.5H16 M12 702.5H16 M12 707.5H16 M12 712.5H16 M12 717.5H16 M12 722.5H16 M12 727.5H16 M12 732.5H16 M12 737.5H16 M12 742.5H16 M0 747.5H16 M12 752.5H16 M12 756.5H16 M12 761.5H16 M12 766.5H16 M12 771.5H16 M12 776.5H16 M12 781.5H16 M12 786.5H16 M12 791.5H16 M0 796.5H16 M12 801.5H16 M12 806.5H16 M12 811.5H16 M12 816.5H16 M12 821.5H16 M12 826.5H16" stroke="#9a9a9a" stroke-width="1"/><path d="M15.5 0V831" stroke="#8a8a8a"/></svg>
<div class="a rlv" style="left:2px;top:139px">5</div>
<div class="a rlv" style="left:2px;top:189px">0</div>
<div class="a rlv" style="left:2px;top:238px">5</div>
<div class="a rlv" style="left:2px;top:288px">1<br>0</div>
<div class="a rlv" style="left:2px;top:338px">1<br>5</div>
<div class="a rlv" style="left:2px;top:387px">2<br>0</div>
<div class="a rlv" style="left:2px;top:437px">2<br>5</div>
<div class="a rlv" style="left:2px;top:487px">3<br>0</div>
<div class="a rlv" style="left:2px;top:537px">3<br>5</div>
<div class="a rlv" style="left:2px;top:586px">4<br>0</div>
<div class="a rlv" style="left:2px;top:636px">4<br>5</div>
<div class="a rlv" style="left:2px;top:686px">5<br>0</div>
<div class="a rlv" style="left:2px;top:735px">5<br>5</div>
<div class="a rlv" style="left:2px;top:785px">6<br>0</div>
<div class="a rlv" style="left:2px;top:835px">6<br>5</div>
<div class="a rlv" style="left:2px;top:885px">7<br>0</div>
<div class="a rlv" style="left:2px;top:934px">7<br>5</div>
<div class="a rlv" style="left:2px;top:984px">8<br>0</div>
<div class="a" style="left:15px;top:120px;width:1px;height:16px;background:#777"></div>
<svg class="a" style="left:2px;top:122px" width="12" height="12"><path d="M6 0v12M0 6h12" stroke="#aaa" stroke-dasharray="1 1"/></svg>

<!-- SCROLLBAR V -->
<div class="a" style="left:1097px;top:120px;width:15px;height:847px;background:#4a4a4a"></div>
<svg class="a" style="left:1100px;top:124px" width="10" height="6"><path d="M1 5l4-4 4 4" stroke="#808080" stroke-width="1.1" fill="none"/></svg>
<svg class="a" style="left:1100px;top:957px" width="10" height="6"><path d="M1 1l4 4 4-4" stroke="#808080" stroke-width="1.1" fill="none"/></svg>

<!-- DOCK -->
<div class="a" style="left:1112px;top:90px;width:2px;height:894px;background:#3a3a3a"></div>
<div class="a" style="left:1114px;top:90px;width:166px;height:894px;background:#535353"></div>
<div class="a" style="left:1114px;top:90px;width:166px;height:12px;background:#434343;border-bottom:1px solid #3a3a3a"></div>
<svg class="a" style="left:1266px;top:94px" width="9" height="6"><path d="M4 0L1 3l3 3M8 0L5 3l3 3" stroke="#d0d0d0" stroke-width="1.2" fill="none"/></svg>
<!-- group separators -->
<div class="a dsep" style="top:199px"></div>
<div class="a dsep" style="top:268px"></div>
<div class="a dsep" style="top:337px"></div>
<div class="a dsep" style="top:434px"></div>
<div class="a dsep" style="top:503px"></div>
<div class="a dsep" style="top:572px"></div>
<div class="a grip" style="top:107px"></div>
<div class="a grip" style="top:204px"></div>
<div class="a grip" style="top:273px"></div>
<div class="a grip" style="top:342px"></div>
<div class="a grip" style="top:439px"></div>
<div class="a grip" style="top:508px"></div>
<div class="a" style="left:1120px;top:475px;width:155px;height:22px;background:#383838;border:1px solid #4a4a4a;border-radius:3px"></div>
<div class="a di" style="top:120px">Pages</div>
<div class="a di" style="top:148px">Layers</div>
<div class="a di" style="top:176px">Links</div>
<div class="a di" style="top:217px">Gradient</div>
<div class="a di" style="top:245px">Color</div>
<div class="a di" style="top:286px">Stroke</div>
<div class="a di" style="top:314px">Swatches</div>
<div class="a di" style="top:355px">Align</div>
<div class="a di" style="top:383px">Pathfinder</div>
<div class="a di" style="top:411px">Transform</div>
<div class="a di" style="top:452px">Character</div>
<div class="a di" style="top:480px">Paragraph</div>
<div class="a di" style="top:521px">Character Styles</div>
<div class="a di" style="top:549px">Paragraph Styles</div>
<!-- icons -->
<svg class="a" style="left:1125px;top:117px" width="19" height="20" viewBox="0 0 19 20"><path d="M1 5l3-3h4v15H1zM18 5l-3-3h-4v15h7z" fill="#cfcfcf"/><path d="M9.5 0v20" stroke="#cfcfcf" stroke-width="1.2"/></svg>
<svg class="a" style="left:1125px;top:146px" width="19" height="18" viewBox="0 0 19 18"><path d="M9.5 0L18 5l-8.5 5L1 5z" fill="#cfcfcf"/><path d="M3 8.5L1 10l8.5 5 8.5-5-2-1.5-6.5 4z" fill="#cfcfcf"/></svg>
<svg class="a" style="left:1124px;top:177px" width="20" height="11" viewBox="0 0 20 11"><path d="M8 2H5a3.5 3.5 0 0 0 0 7h3M12 2h3a3.5 3.5 0 0 1 0 7h-3M6 5.5h8" stroke="#cfcfcf" stroke-width="2" fill="none"/></svg>
<svg class="a" style="left:1126px;top:217px" width="17" height="14" viewBox="0 0 17 14"><defs><linearGradient id="gr1"><stop offset="0" stop-color="#dcdcdc"/><stop offset="1" stop-color="#3a3a3a"/></linearGradient></defs><rect x=".5" y=".5" width="16" height="13" fill="url(#gr1)" stroke="#cfcfcf"/></svg>
<svg class="a" style="left:1124px;top:244px" width="20" height="15" viewBox="0 0 20 15"><path d="M10 1C4 1 0 5 1 9c1 4 5 5 7 5 2 0 1-3 3-3s4 1 6-1 3-3 2-5-4-4-9-4z" fill="#cfcfcf"/><circle cx="5" cy="9" r="1.3" fill="#535353"/><circle cx="8" cy="11.5" r="1.2" fill="#535353"/><circle cx="7" cy="5" r="1.3" fill="#535353"/><circle cx="13" cy="7" r="1.3" fill="#535353"/><circle cx="12" cy="3.5" r="1.2" fill="#535353"/></svg>
<svg class="a" style="left:1126px;top:286px" width="17" height="14" viewBox="0 0 17 14"><path d="M0 1h17M0 6h17" stroke="#cfcfcf" stroke-width="1.5"/><rect x="0" y="9.5" width="17" height="4" fill="#cfcfcf"/></svg>
<svg class="a" style="left:1126px;top:314px" width="16" height="14" viewBox="0 0 16 14"><rect x="0" y="0" width="16" height="14" fill="#8a8a8a"/><g fill="#cfcfcf"><rect x="1" y="1" width="4" height="5.5"/><rect x="6" y="1" width="4" height="5.5"/><rect x="11" y="1" width="4" height="5.5"/><rect x="1" y="7.5" width="4" height="5.5"/><rect x="6" y="7.5" width="4" height="5.5"/><rect x="11" y="7.5" width="4" height="5.5"/></g></svg>
<svg class="a" style="left:1126px;top:352px" width="17" height="19" viewBox="0 0 17 19"><path d="M1 0v19" stroke="#cfcfcf" stroke-width="1.3"/><rect x="3" y="3" width="8" height="5" fill="#cfcfcf"/><rect x="3" y="11" width="13" height="5" fill="#cfcfcf"/></svg>
<svg class="a" style="left:1126px;top:382px" width="16" height="16" viewBox="0 0 16 16"><rect x="1" y="1" width="9" height="9" fill="#cfcfcf"/><rect x="6" y="6" width="9" height="9" fill="#cfcfcf" stroke="#535353" stroke-width="1"/></svg>
<svg class="a" style="left:1126px;top:410px" width="16" height="16" viewBox="0 0 16 16"><path d="M3 3h10v10H3z" stroke="#cfcfcf" stroke-dasharray="1.5 1.5" fill="none"/><g fill="#cfcfcf"><rect x="0" y="0" width="4" height="4"/><rect x="12" y="0" width="4" height="4"/><rect x="0" y="12" width="4" height="4"/><rect x="12" y="12" width="4" height="4"/><rect x="7" y="7" width="2" height="2"/></g></svg>
<svg class="a" style="left:1126px;top:449px" width="18" height="19" viewBox="0 0 18 19"><path d="M1 17L6.5 3 12 17M3 12h7" stroke="#cfcfcf" stroke-width="2.2" fill="none"/><path d="M16.5 0v19" stroke="#cfcfcf" stroke-width="1.2"/></svg>
<svg class="a" style="left:1127px;top:478px" width="14" height="18" viewBox="0 0 14 18"><path d="M6 1a4.5 4.5 0 0 0 0 9h1V1z" fill="#cfcfcf"/><path d="M7 1h6M8 1v16M11 1v16" stroke="#cfcfcf" stroke-width="1.6"/></svg>
<svg class="a" style="left:1125px;top:518px" width="20" height="20" viewBox="0 0 20 20"><path d="M8 14L13 1l5 13M10 9.5h6" stroke="#cfcfcf" stroke-width="1.8" fill="none"/><rect x="1.5" y="12" width="5" height="5" stroke="#cfcfcf" stroke-width="1.2" fill="#535353"/><rect x="4" y="14.5" width="5" height="5" stroke="#cfcfcf" stroke-width="1.2" fill="#535353"/></svg>
<svg class="a" style="left:1125px;top:546px" width="20" height="20" viewBox="0 0 20 20"><path d="M12 2a3.5 3.5 0 0 0 0 7h1V2z" fill="#cfcfcf"/><path d="M13 2h5M14 2v13M17 2v13" stroke="#cfcfcf" stroke-width="1.4"/><rect x="1.5" y="12" width="5" height="5" stroke="#cfcfcf" stroke-width="1.2" fill="#535353"/><rect x="4" y="14.5" width="5" height="5" stroke="#cfcfcf" stroke-width="1.2" fill="#535353"/></svg>


<!-- STATUS BAR -->
<div class="a" style="left:0;top:967px;width:1112px;height:17px;background:#535353"></div>
<svg class="a" style="left:12px;top:971px" width="10" height="9"><path d="M1 0v9" stroke="#8a8a8a" stroke-width="2"/><path d="M10 0L3 4.5 10 9z" fill="#8a8a8a"/></svg>
<svg class="a" style="left:34px;top:971px" width="7" height="9"><path d="M7 0L0 4.5 7 9z" fill="#8a8a8a"/></svg>
<div class="a" style="left:52px;top:968px;width:91px;height:15px;border:1px solid #3e3e3e;border-radius:2px;background:#474747"></div>
<div class="a" style="left:124px;top:968px;width:1px;height:15px;background:#3e3e3e"></div>
<div class="a" style="left:56px;top:968px;color:#f0f0f0;font-size:11px">5</div>
<svg class="a" style="left:129px;top:973px" width="9" height="5"><path d="M1 1l3.5 3.5L8 1" stroke="#d0d0d0" stroke-width="1.1" fill="none"/></svg>
<svg class="a" style="left:155px;top:971px" width="7" height="9"><path d="M0 0l7 4.5L0 9z" fill="#8a8a8a"/></svg>
<svg class="a" style="left:173px;top:971px" width="10" height="9"><path d="M9 0v9" stroke="#8a8a8a" stroke-width="2"/><path d="M0 0l7 4.5L0 9z" fill="#8a8a8a"/></svg>
<svg class="a" style="left:199px;top:968px" width="17" height="15" viewBox="0 0 17 15"><path d="M7 1a6 6 0 1 0 6 6H7z" fill="#8a8a8a"/><path d="M8 0v6h6A6 6 0 0 0 8 0z" fill="#8a8a8a"/><path d="M13 12l2 2 2-2z" fill="#8a8a8a"/></svg>
<div class="a" style="left:232px;top:968px;color:#e0e0e0;font-size:11px">[Basic] (working)</div>
<svg class="a" style="left:334px;top:973px" width="9" height="5"><path d="M1 1l3.5 3.5L8 1" stroke="#d0d0d0" stroke-width="1.1" fill="none"/></svg>
<div class="a" style="left:358px;top:970px;width:10px;height:10px;border-radius:50%;background:#3cb043"></div>
<div class="a" style="left:374px;top:968px;color:#e0e0e0;font-size:11px">No errors</div>
<svg class="a" style="left:433px;top:973px" width="9" height="5"><path d="M1 1l3.5 3.5L8 1" stroke="#d0d0d0" stroke-width="1.1" fill="none"/></svg>
<div class="a" style="left:450px;top:967px;width:630px;height:17px;background:#4f4f4f"></div>
<svg class="a" style="left:456px;top:971px" width="6" height="9"><path d="M5 1L1 4.5 5 8" stroke="#8a8a8a" stroke-width="1.1" fill="none"/></svg>
<div class="a" style="left:742px;top:969px;width:126px;height:13px;border-radius:7px;background:#6c6c6c"></div>
<svg class="a" style="left:1064px;top:971px" width="6" height="9"><path d="M1 1l4 3.5L1 8" stroke="#8a8a8a" stroke-width="1.1" fill="none"/></svg>
<div class="a" style="left:1075px;top:967px;width:37px;height:17px;background:#565656"></div>
<svg class="a" style="left:1078px;top:969px" width="16" height="12"><rect x="1" y="1" width="14" height="10" fill="none" stroke="#c8c8c8" stroke-width="1.3"/><path d="M8 1v10" stroke="#c8c8c8" stroke-width="1.3"/></svg>
<svg class="a" style="left:1100px;top:971px" width="10" height="10"><g fill="#8a8a8a"><rect x="8" y="0" width="1" height="1"/><rect x="6" y="2" width="1" height="1"/><rect x="8" y="2" width="1" height="1"/><rect x="4" y="4" width="1" height="1"/><rect x="6" y="4" width="1" height="1"/><rect x="8" y="4" width="1" height="1"/><rect x="2" y="6" width="1" height="1"/><rect x="4" y="6" width="1" height="1"/><rect x="6" y="6" width="1" height="1"/><rect x="8" y="6" width="1" height="1"/><rect x="0" y="8" width="1" height="1"/><rect x="2" y="8" width="1" height="1"/><rect x="4" y="8" width="1" height="1"/><rect x="6" y="8" width="1" height="1"/><rect x="8" y="8" width="1" height="1"/></g></svg>

<!-- TASKBAR -->
<div class="a" style="left:0;top:984px;width:1280px;height:40px;background:#0e1a20"></div>
<svg class="a" style="left:16px;top:996px" width="16" height="16" viewBox="0 0 16 16"><path d="M0 2.2L6.5 1.3V7.6H0zM7.5 1.1L16 0v7.6H7.5zM0 8.4h6.5v6.3L0 13.8zM7.5 8.4H16V16l-8.5-1.1z" fill="#fff"/></svg>
<svg class="a" style="left:63px;top:995px" width="18" height="18" viewBox="0 0 18 18"><circle cx="11" cy="7" r="5.5" stroke="#fff" stroke-width="1.4" fill="none"/><path d="M7 11l-6 6" stroke="#fff" stroke-width="1.5"/></svg>
<svg class="a" style="left:109px;top:996px" width="22" height="16" viewBox="0 0 22 16"><rect x="5" y="1" width="12" height="14" stroke="#fff" stroke-width="1.4" fill="none"/><path d="M3 3H1v10h2M19 3h2v10h-2" stroke="#fff" stroke-width="1.2" fill="none"/></svg>
<div class="a" style="left:151px;top:1021px;width:40px;height:3px;background:#76b9ed"></div>
<svg class="a" style="left:159px;top:992px" width="24" height="24" viewBox="0 0 24 24"><circle cx="12" cy="12" r="11" fill="#db4437"/><path d="M12 12L22.5 8.6A11 11 0 0 1 12 23z" fill="#f4c20d"/><path d="M12 12v11A11 11 0 0 1 2.5 6.5z" fill="#0f9d58"/><path d="M12 12L2.5 6.5A11 11 0 0 1 22.5 8.6z" fill="#db4437"/><circle cx="12" cy="12" r="5" fill="#fff"/><circle cx="12" cy="12" r="4" fill="#4285f4"/></svg>
<div class="a" style="left:196px;top:984px;width:47px;height:40px;background:#2b373d"></div>
<div class="a" style="left:196px;top:1021px;width:47px;height:3px;background:#76b9ed"></div>
<div class="a" style="left:209px;top:993px;width:22px;height:22px;background:#2a0a1c;border:1.5px solid #ff3b8e"></div>
<div class="a" style="left:213px;top:996px;font-size:13px;font-weight:bold;color:#ff3b8e">Id</div>
<div class="a" style="left:249px;top:1021px;width:40px;height:3px;background:#76b9ed"></div>
<svg class="a" style="left:258px;top:994px" width="24" height="22" viewBox="0 0 24 22"><path d="M1 3h8l2 2h12v16H1z" fill="#e8b43c"/><path d="M1 7h22v14H1z" fill="#f6d46a"/><rect x="8" y="13" width="8" height="6" fill="#2a88d8"/></svg>
<div class="a" style="left:298px;top:1021px;width:40px;height:3px;background:#76b9ed"></div>
<div class="a" style="left:307px;top:993px;width:22px;height:22px;background:#061e2c;border:1.5px solid #31a8ff"></div>
<div class="a" style="left:310px;top:996px;font-size:12.5px;font-weight:bold;color:#31a8ff">Ps</div>
<div class="a" style="left:347px;top:1021px;width:40px;height:3px;background:#76b9ed"></div>
<div class="a" style="left:356px;top:993px;width:22px;height:22px;background:#261300;border:1.5px solid #ff9a00"></div>
<div class="a" style="left:360px;top:996px;font-size:12.5px;font-weight:bold;color:#ff9a00">Ai</div>
<div class="a" style="left:396px;top:1021px;width:40px;height:3px;background:#76b9ed"></div>
<div class="a" style="left:405px;top:993px;width:22px;height:22px;background:#2a0000;border:1.5px solid #e21a1a"></div>
<svg class="a" style="left:408px;top:996px" width="16" height="16" viewBox="0 0 16 16"><path d="M2 13c2-1 4-5 5-9 0-2-1-2-1 0 0 3 3 6 7 7 1 0 1 1 0 1-3 0-8 1-10 2-1 0-2 0-1-1z" stroke="#e21a1a" stroke-width="1.3" fill="none"/></svg>
<svg class="a" style="left:1035px;top:998px" width="14" height="9"><path d="M1 8l6-6 6 6" stroke="#fff" stroke-width="1.3" fill="none"/></svg>
<svg class="a" style="left:1056px;top:995px" width="18" height="16" viewBox="0 0 18 16"><rect x="4" y="2" width="13" height="9" stroke="#fff" stroke-width="1.2" fill="none"/><path d="M9 11v3M6 14h7M1 1h4v5H1z" stroke="#fff" stroke-width="1.2" fill="none"/></svg>
<svg class="a" style="left:1081px;top:995px" width="16" height="16" viewBox="0 0 16 16"><path d="M1 6h3l4-4v12l-4-4H1z" stroke="#fff" stroke-width="1.2" fill="none"/><path d="M10 5a4 4 0 0 1 0 6M12 3a7 7 0 0 1 0 10" stroke="#fff" stroke-width="1.2" fill="none"/></svg>
<svg class="a" style="left:1105px;top:993px" width="18" height="18" viewBox="0 0 18 18"><path d="M1 9c0-4 3-7 7-7s7 3 7 6H1z" fill="#fff"/><path d="M2 6h12M3 4h10" stroke="#0e1a20" stroke-width=".8"/><circle cx="12" cy="13" r="4.5" fill="#2ea043"/><path d="M9.8 13l1.6 1.6 2.8-3" stroke="#fff" stroke-width="1.3" fill="none"/></svg>
<div class="a" style="left:1132px;top:997px;font-size:12px;color:#fff">РУС</div>
<div class="a" style="left:1164px;top:989px;font-size:12px;color:#fff;width:60px;text-align:center;transform:scaleX(.92)">10:33</div>
<div class="a" style="left:1158px;top:1007px;font-size:12px;color:#fff;width:72px;text-align:center;transform:scaleX(.9)">01.08.2018</div>
<svg class="a" style="left:1238px;top:994px" width="26" height="26" viewBox="0 0 26 26"><path d="M1 1h15v10H7l-3 3v-3H1z" fill="#fff"/><path d="M3.5 4h10M3.5 6.5h10M3.5 9h7" stroke="#0e1a20" stroke-width="1"/><circle cx="17" cy="17" r="7.5" fill="#2a2f33" stroke="#8a9095" stroke-width="1"/><text x="17" y="21" font-size="11" font-family="Liberation Sans" font-weight="bold" fill="#fff" text-anchor="middle">1</text></svg>
<div class="a" style="left:1274px;top:984px;width:1px;height:40px;background:#5a6a70"></div>


<div class="a" style="left:872px;top:432px;width:242px;height:296px;background:#535353;border:1px solid #2e2e2e;border-top:2px solid #2e2e2e;box-shadow:0 2px 4px rgba(0,0,0,.4)"></div>
<div class="a" style="left:873px;top:434px;width:240px;height:29px;background:#424242"></div>
<div class="a" style="left:948px;top:436px;width:84px;height:8px;background:#595959"></div>
<div class="a" style="left:1093px;top:442px;width:18px;height:15px;border:1px solid #6a6a6a;border-radius:2px;background:#3c3c3c"></div>
<svg class="a" style="left:1096px;top:445px" width="12" height="10"><path d="M0 1.5h12M0 4.5h12M0 7.5h12" stroke="#d8d8d8" stroke-width="1.2"/></svg>
<svg class="a" style="left:1090px;top:476px" width="20" height="16"><path d="M3 2h10M6 5h7M3 8h10M6 11h7M3 14h10" stroke="#cfcfcf" stroke-width="1.2"/><path d="M16 1v15" stroke="#cfcfcf" stroke-width="1.3"/></svg>
<div class="a" style="left:880px;top:498px;width:230px;height:1px;background:#474747"></div>
<div class="a pbox" style="top:504px"></div>
<div class="a pbox" style="top:530px"></div>
<div class="a" style="left:880px;top:556px;width:230px;height:1px;background:#474747"></div>
<div class="a pbox" style="top:562px"></div>
<div class="a pbox" style="top:588px"></div>
<div class="a" style="left:880px;top:616px;width:230px;height:1px;background:#474747"></div>
<div class="a pbox" style="top:626px;background:#5a5a5a;border-color:#5a5a5a"></div>
<svg class="a" style="left:1094px;top:633px" width="10" height="6"><path d="M1 1l4 4 4-4" stroke="#8a8a8a" stroke-width="1.2" fill="none"/></svg>
<div class="a pbox" style="top:660px;background:#5a5a5a;border-color:#5a5a5a"></div>
<svg class="a" style="left:1094px;top:667px" width="10" height="6"><path d="M1 1l4 4 4-4" stroke="#8a8a8a" stroke-width="1.2" fill="none"/></svg>
<div class="a" style="left:880px;top:692px;width:230px;height:1px;background:#474747"></div>
<div class="a" style="left:1060px;top:698px;width:48px;height:21px;background:#383838;border-radius:3px"></div>
<svg class="a" style="left:1093px;top:704px" width="14" height="10"><path d="M0 1h5M0 4h5M0 7h5M0 9.5h5M8 1h6M8 4h6M8 7h6M8 9.5h6" stroke="#d0d0d0" stroke-width="1"/></svg>

<div class="a" style="left:693px;top:442px;width:400px;height:474px;background:#f2f2f2;border:1px solid #d8d8d8;box-shadow:2px 3px 4px rgba(0,0,0,.55)"></div>
<div class="a mi" style="left:728px;top:448.5px;color:#161616"><span style="display:inline-block;transform:scaleX(0.992);transform-origin:0 0">Hide Options</span></div>
<div class="a" style="left:724px;top:470px;width:366px;height:1px;background:#cdcdcd"></div>
<div class="a mi" style="left:728px;top:478.0px;color:#161616"><span style="display:inline-block;transform:scaleX(0.992);transform-origin:0 0">Adobe World-Ready Single-line Composer</span></div>
<div class="a mi" style="left:728px;top:500.0px;color:#161616"><span style="display:inline-block;transform:scaleX(0.992);transform-origin:0 0">Adobe World-Ready Paragraph Composer</span></div>
<div class="a mi" style="left:728px;top:522.0px;color:#161616"><span style="display:inline-block;transform:scaleX(0.992);transform-origin:0 0">Adobe Paragraph Composer</span></div>
<div class="a mi" style="left:728px;top:544.0px;color:#161616"><span style="display:inline-block;transform:scaleX(0.992);transform-origin:0 0">Adobe Single-line Composer</span></div>
<div class="a" style="left:724px;top:565px;width:366px;height:1px;background:#cdcdcd"></div>
<div class="a mi" style="left:728px;top:573.0px;color:#161616"><span style="display:inline-block;transform:scaleX(0.992);transform-origin:0 0">Only Align First Line to Grid</span></div>
<div class="a mi" style="left:728px;top:595.0px;color:#161616"><span style="display:inline-block;transform:scaleX(0.992);transform-origin:0 0">Balance Ragged Lines</span></div>
<div class="a mi" style="left:728px;top:617.0px;color:#8c8c8c"><span style="display:inline-block;transform:scaleX(0.992);transform-origin:0 0">Ignore Optical Margin</span></div>
<div class="a" style="left:724px;top:638px;width:366px;height:1px;background:#cdcdcd"></div>
<div class="a mi" style="left:728px;top:646.0px;color:#161616"><span style="display:inline-block;transform:scaleX(0.992);transform-origin:0 0">Justification...</span></div>
<div class="a mi" style="right:208px;top:646.0px;color:#161616;transform:scaleX(0.992);transform-origin:100% 0">Ctrl+Alt+Shift+J</div>
<div class="a mi" style="left:728px;top:668.0px;color:#161616"><span style="display:inline-block;transform:scaleX(0.992);transform-origin:0 0">Keep Options...</span></div>
<div class="a mi" style="right:208px;top:668.0px;color:#161616;transform:scaleX(0.992);transform-origin:100% 0">Ctrl+Alt+K</div>
<div class="a mi" style="left:728px;top:690.0px;color:#161616"><span style="display:inline-block;transform:scaleX(0.992);transform-origin:0 0">Span Columns...</span></div>
<div class="a mi" style="left:728px;top:712.0px;color:#161616"><span style="display:inline-block;transform:scaleX(0.992);transform-origin:0 0">Hyphenation...</span></div>
<div class="a mi" style="left:728px;top:734.0px;color:#161616"><span style="display:inline-block;transform:scaleX(0.992);transform-origin:0 0">Drop Caps and Nested Styles...</span></div>
<div class="a mi" style="right:208px;top:734.0px;color:#161616;transform:scaleX(0.992);transform-origin:100% 0">Ctrl+Alt+R</div>
<div class="a mi" style="left:728px;top:756.0px;color:#161616"><span style="display:inline-block;transform:scaleX(0.992);transform-origin:0 0">GREP Styles...</span></div>
<div class="a mi" style="left:728px;top:778.0px;color:#161616"><span style="display:inline-block;transform:scaleX(0.992);transform-origin:0 0">Paragraph Rules...</span></div>
<div class="a mi" style="right:208px;top:778.0px;color:#161616;transform:scaleX(0.992);transform-origin:100% 0">Ctrl+Alt+J</div>
<div class="a mi" style="left:728px;top:800.0px;color:#161616"><span style="display:inline-block;transform:scaleX(0.992);transform-origin:0 0">Paragraph Borders and Shading...</span></div>
<div class="a" style="left:724px;top:821px;width:366px;height:1px;background:#cdcdcd"></div>
<div class="a mi" style="left:728px;top:829.0px;color:#161616"><span style="display:inline-block;transform:scaleX(0.992);transform-origin:0 0">Bullets and Numbering...</span></div>
<div class="a mi" style="left:728px;top:851.0px;color:#8c8c8c"><span style="display:inline-block;transform:scaleX(0.992);transform-origin:0 0">Restart/Continue Numbering</span></div>
<div class="a mi" style="left:728px;top:873.0px;color:#8c8c8c"><span style="display:inline-block;transform:scaleX(0.992);transform-origin:0 0">Convert Bullets and Numbering to Text</span></div>
<div class="a mi" style="left:728px;top:895.0px;color:#161616"><span style="display:inline-block;transform:scaleX(0.992);transform-origin:0 0">Define Lists...</span></div>
<div class="a" style="left:696px;top:518px;width:22px;height:22px;background:#92c5f5"></div>
<svg class="a" style="left:700px;top:523px" width="14" height="12"><path d="M2 6l3.5 3.5L12 2" stroke="#222" stroke-width="1.6" fill="none"/></svg>
</body></html>
